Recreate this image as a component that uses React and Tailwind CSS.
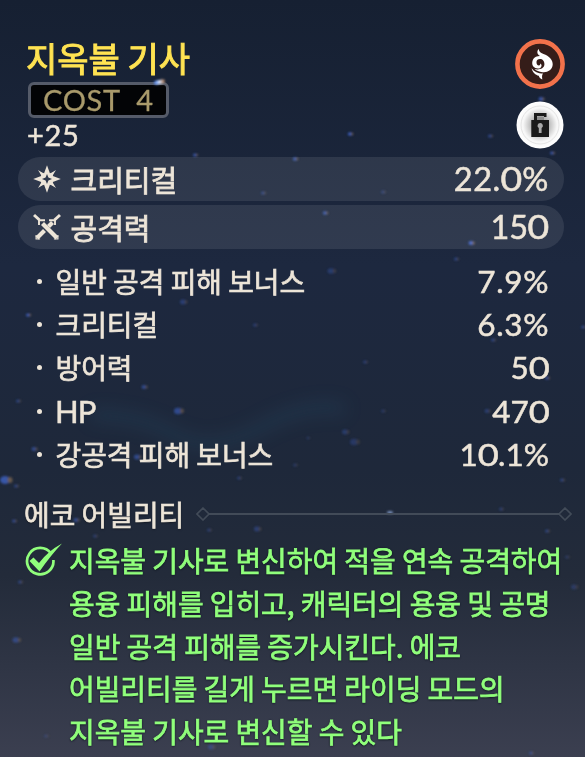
import clsx from 'clsx';

const mainStats = [
  { icon: 'crit', label: '크리티컬', value: '22.0%' },
  { icon: 'attack', label: '공격력', value: '150' },
];

const subStats = [
  { label: '일반 공격 피해 보너스', value: '7.9%' },
  { label: '크리티컬', value: '6.3%' },
  { label: '방어력', value: '50' },
  { label: 'HP', value: '470', latin: true },
  { label: '강공격 피해 보너스', value: '10.1%' },
];

const abilityLines = [
  '지옥불 기사로 변신하여 적을 연속 공격하여',
  '용융 피해를 입히고, 캐릭터의 용융 및 공명',
  '일반 공격 피해를 증가시킨다. 에코',
  '어빌리티를 길게 누르면 라이딩 모드의',
  '지옥불 기사로 변신할 수 있다',
];

// x, y, radius, opacity
const stars = [
  [195, 155, 2, 0.8], [350, 134, 2.2, 0.9], [295, 159, 2.2, 0.8], [263, 193, 2, 0.5],
  [325, 213, 2.2, 0.8], [383, 192, 2, 0.4], [471, 243, 2.5, 1], [490, 136, 2, 0.6],
  [552, 153, 2, 0.8], [541, 99, 2.5, 0.8], [28, 315, 2, 0.9], [183, 302, 3, 0.4],
  [255, 325, 2, 0.4], [331, 271, 3.5, 0.35], [18, 401, 2, 0.5], [144, 387, 2.5, 0.6],
  [178, 411, 4, 0.6], [34, 449, 2.5, 0.6], [5, 480, 5, 0.8], [137, 457, 3, 0.6],
  [16, 486, 2, 0.5], [14, 521, 2, 0.6], [76, 520, 2.5, 0.6], [257, 529, 3, 0.4],
  [209, 530, 2, 0.4], [95, 536, 2, 0.4], [20, 582, 2, 0.5], [16, 640, 3.5, 0.5],
  [46, 736, 2, 0.3], [211, 747, 3, 0.4], [547, 531, 2, 0.5], [574, 587, 3, 0.3],
  [567, 557, 2, 0.3], [501, 509, 2, 0.4], [493, 340, 2, 0.5], [547, 378, 2, 0.7],
  [487, 411, 2.5, 0.4], [456, 259, 2, 0.5], [531, 753, 2, 0.5], [562, 480, 2, 0.5],
  [308, 438, 1.5, 0.3], [583, 327, 2, 0.5], [365, 362, 2, 0.4], [345, 432, 3, 0.35],
  [354, 442, 4, 0.3], [383, 411, 2, 0.3], [239, 478, 2, 0.4], [295, 465, 2, 0.3],
];

function NightSky() {
  return (
    <svg className="absolute inset-0 h-full w-full" viewBox="0 0 585 757" aria-hidden="true">
      <defs>
        <filter id="soft"><feGaussianBlur stdDeviation="0.8" /></filter>
        <filter id="mist" x="-50%" y="-200%" width="200%" height="500%">
          <feGaussianBlur stdDeviation="9" />
        </filter>
      </defs>
      <path
        d="M90 415Q140 415 175 435T260 428T345 410"
        stroke="#27506b"
        strokeWidth="12"
        fill="none"
        opacity="0.3"
        filter="url(#mist)"
      />
      <g filter="url(#soft)">
        {stars.map(([x, y, r, o]) => (
          <g key={`${x}-${y}`} opacity={o}>
            <ellipse cx={x} cy={y} rx={r} ry={r * 0.8} fill="#3f62c4" />
            <ellipse cx={x + r} cy={y} rx={r * 0.5} ry={r * 0.6} fill="#7b6752" />
          </g>
        ))}
        <ellipse cx="390" cy="512.500" rx="3" ry="1.500" fill="#7d94c0" />
      </g>
    </svg>
  );
}

function CritIcon() {
  return (
    <svg width="28" height="28" viewBox="0 0 28 28" fill="#ede5d8">
      <path
        fillRule="evenodd"
        d="M14 .2 16.900 8.200 21.200 6.800 19.800 11.100 27.800 14 19.800 16.900 21.200 21.200 16.900 19.800 14 27.800 11.100 19.800 6.800 21.200 8.200 16.900 .2 14 8.200 11.100 6.800 6.800 11.100 8.200ZM14 9 12.600 12.600 9 14 12.600 15.400 14 19 15.400 15.400 19 14 15.400 12.600Z"
      />
      <path d="M5 5 9 7.500 7.500 9ZM23 5 20.500 9 19 7.500ZM5 23 7.500 19 9 20.500ZM23 23 19 20.500 20.500 19Z" />
    </svg>
  );
}

function AttackIcon() {
  return (
    <svg width="28" height="28" viewBox="0 0 28 28" fill="none" stroke="#ede5d8">
      <path d="M1 2 6.500 7M27 2l-5.500 5" strokeWidth="3" />
      <path d="M6 12V7.200H12M22 12V7.200H16" strokeWidth="1.900" />
      <path d="M9.500 10.500 24 25" strokeWidth="4.200" />
      <path d="M19.500 9.500 15.500 13.500M11.500 17.500 4 25" strokeWidth="4.200" />
      <path d="M3.100 22v4h4M24.900 22v4h-4" strokeWidth="1.200" />
    </svg>
  );
}

function FusionBadge() {
  return (
    <svg width="50" height="50" viewBox="0 0 50 50">
      <circle cx="25" cy="25" r="22.600" fill="#351d19" stroke="#f2724b" strokeWidth="4.600" />
      {/* upper horn sweeping into the right side */}
      <path
        fill="#fff"
        d="M23.800 10C23.800 12.300 25.300 13.800 28.500 15C34 17 38 20.800 37.700 25.800C37.200 31 32.500 33.800 27.500 33.200C24 32.800 21.500 31.800 19.500 30C24 31.200 29 29.800 29.400 25.500C29.600 22 27.500 20 25 20C22.800 20.100 21.600 21.200 21.500 22.800C21.300 25 22.300 26.500 24 26.500C25 26.400 25.400 25.600 25.200 24.600C26.900 25.500 27 27.600 25.600 28.700C23.600 30.100 20.200 29.800 18.300 27.600C16.800 25.700 16.800 22.300 18.300 20C19.600 18 21.800 17 25 17C22 15.500 21.500 12 23.800 10Z"
      />
      {/* lower tail */}
      <path fill="#fff" d="M16.600 29.200C19.500 33 23 34.300 28 34.600C26.800 36 27 38 27.300 40.500C25.300 39.800 24.300 38.500 23.800 36.800C20.500 35.800 17.500 33.500 16.600 29.200Z" />
    </svg>
  );
}

function UnlockBadge() {
  return (
    <svg width="48" height="48" viewBox="0 0 48 48">
      <defs>
        <radialGradient id="disc">
          <stop offset="0.35" stopColor="#b5b5b5" />
          <stop offset="0.72" stopColor="#f7f7f7" />
          <stop offset="1" stopColor="#fff" />
        </radialGradient>
      </defs>
      <circle cx="24" cy="24" r="23.500" fill="url(#disc)" />
      <circle cx="24" cy="24" r="19" fill="none" stroke="#dadada" strokeWidth="0.700" />
      <path d="M21 15.500H28V19.500H21Z" fill="#8d8d8d" />
      <path d="M18 12H30.500V16H28V15H21V19H33V36H15.300V19H18Z" fill="#1a1a1a" />
      <path d="M24.200 22a2.700 2.700 0 0 1 1.400 5V32h-2.800v-5a2.700 2.700 0 0 1 1.400-5Z" fill="#a9a9a9" />
    </svg>
  );
}

function CheckIcon() {
  return (
    <svg width="40" height="36" viewBox="0 0 40 36" fill="none" stroke="#91ff7c">
      <path d="M26.500 9A13.200 13.200 0 1 0 28.900 15.500" strokeWidth="2.700" transform="translate(0.500 1.500)" />
      <path d="M5.500 18 9.500 14.500 15 20Q24 8 38 .5Q27 12 15.500 28.500Z" fill="#91ff7c" stroke="none" />
    </svg>
  );
}

function Divider() {
  return (
    <svg width="376" height="14" viewBox="0 0 376 14" fill="none" stroke="#424b58" strokeWidth="1.600">
      <path d="M7 1 13 7 7 13 1 7ZM369 1 375 7 369 13 363 7Z" />
      <path d="M13 7H363" strokeWidth="2" />
    </svg>
  );
}

// Zero is drawn wider than the font's own figure
function Num({ children, className }) {
  return (
    <span className={clsx("font-['Lato','Noto_Sans_CJK_KR',sans-serif]", className)}>
      {[...children].map((c, i) => (c === '0' ? <span key={i} className="mx-[1px] inline-block scale-x-115">{c}</span> : c))}
    </span>
  );
}

function StatValue({ children, className }) {
  return (
    <Num
      className={clsx(
        'ml-auto [-webkit-text-stroke:0.5px]',
        children.includes('.') && children[0] !== '1' && 'tracking-[0.600px]',
        className,
      )}
    >
      {children}
    </Num>
  );
}

export default function App() {
  return (
    <div className="relative h-[757px] w-[585px] overflow-hidden bg-[linear-gradient(180deg,#162032_0%,#1d283f_35%,#1e283a_62%,#232b3a_76%,#3b3f50_100%)] font-['Noto_Sans_CJK_KR',sans-serif] text-[#ede5d8]">
      <NightSky />

      <div className="relative flex flex-col">
        {/* Name, cost and badges */}
        <header className="flex h-[157px] justify-between pt-[39px] pr-5 pl-[26px]">
          <div className="flex flex-col items-start">
            <h1 className="h-[43px] text-[34px] leading-[37px] text-[#ffe352] [-webkit-text-stroke:1px]">
              지옥불 기사
            </h1>
            <div className="relative ml-0.5 flex h-[36px] w-[141px] items-center rounded-md border-3 border-[#555b69] bg-[#030406] pl-3">
              <Num className="-mt-0.5 text-[29px] leading-none tracking-[0.700px] whitespace-pre text-[#a99a6b] [-webkit-text-stroke:0.3px]">COST  4</Num>
              <span className="absolute -top-[5px] right-[1px] h-[4px] w-[11px] -rotate-12 rounded-full bg-linear-to-r from-[#3c74f0] via-[#dbe8ff] to-[#a86b3c] blur-[0.800px]" />
            </div>
            <Num className="ml-px text-[29px] leading-[34px] tracking-[0.700px] [-webkit-text-stroke:0.5px]">+25</Num>
          </div>
          <div className="flex flex-col items-center gap-[12px]">
            <FusionBadge />
            <UnlockBadge />
          </div>
        </header>

        {/* Main stats */}
        <section className="flex flex-col gap-1 pr-[21px] pl-[18px]">
          {mainStats.map(s => (
            <div key={s.label} className="flex h-[44px] items-center rounded-full bg-white/9 pr-[15px] pl-[15px]">
              {s.icon === 'crit' ? <CritIcon /> : <AttackIcon />}
              <span className="ml-[9.500px] text-[29px] leading-[43px] [-webkit-text-stroke:0.8px]">{s.label}</span>
              <StatValue className="text-[32.500px] leading-[44px]">{s.value}</StatValue>
            </div>
          ))}
        </section>

        {/* Sub stats */}
        <section className="flex flex-col pt-[11px] pr-[36px] pl-[37px]">
          {subStats.map(s => (
            <div key={s.label} className="flex h-[43.200px] items-center">
              <span className="size-[5px] rounded-full bg-[#ede5d8]" />
              {s.latin ? (
                <Num className="ml-[13px] text-[31px] leading-[43px] -tracking-[1px] [-webkit-text-stroke:0.5px]">{s.label}</Num>
              ) : (
                <span className="ml-[13.500px] text-[27.900px] leading-[43px] [-webkit-text-stroke:0.7px]">{s.label}</span>
              )}
              <StatValue className="text-[31.500px] leading-[43px]">{s.value}</StatValue>
            </div>
          ))}
        </section>

        {/* Echo ability */}
        <section className="pt-[16px]">
          <div className="flex h-[44px] items-center pl-[24px]">
            <h2 className="w-[172px] text-[27.900px] leading-[42px] whitespace-nowrap [-webkit-text-stroke:0.7px] [text-shadow:0_1px_2px_#0008]">
              에코 어빌리티
            </h2>
            <Divider />
          </div>
          <div className="flex pt-[3.500px] pl-[24px] text-[#91ff7c]">
            <div className="w-[45px] pt-1">
              <CheckIcon />
            </div>
            <div className="text-[27.900px] leading-[42.600px] whitespace-nowrap [-webkit-text-stroke:0.8px] [text-shadow:0_0_2px_#101820,0_1px_2px_#101820]">
              {abilityLines.map(line => (
                <p key={line}>{line}</p>
              ))}
            </div>
          </div>
        </section>
      </div>
    </div>
  );
}
